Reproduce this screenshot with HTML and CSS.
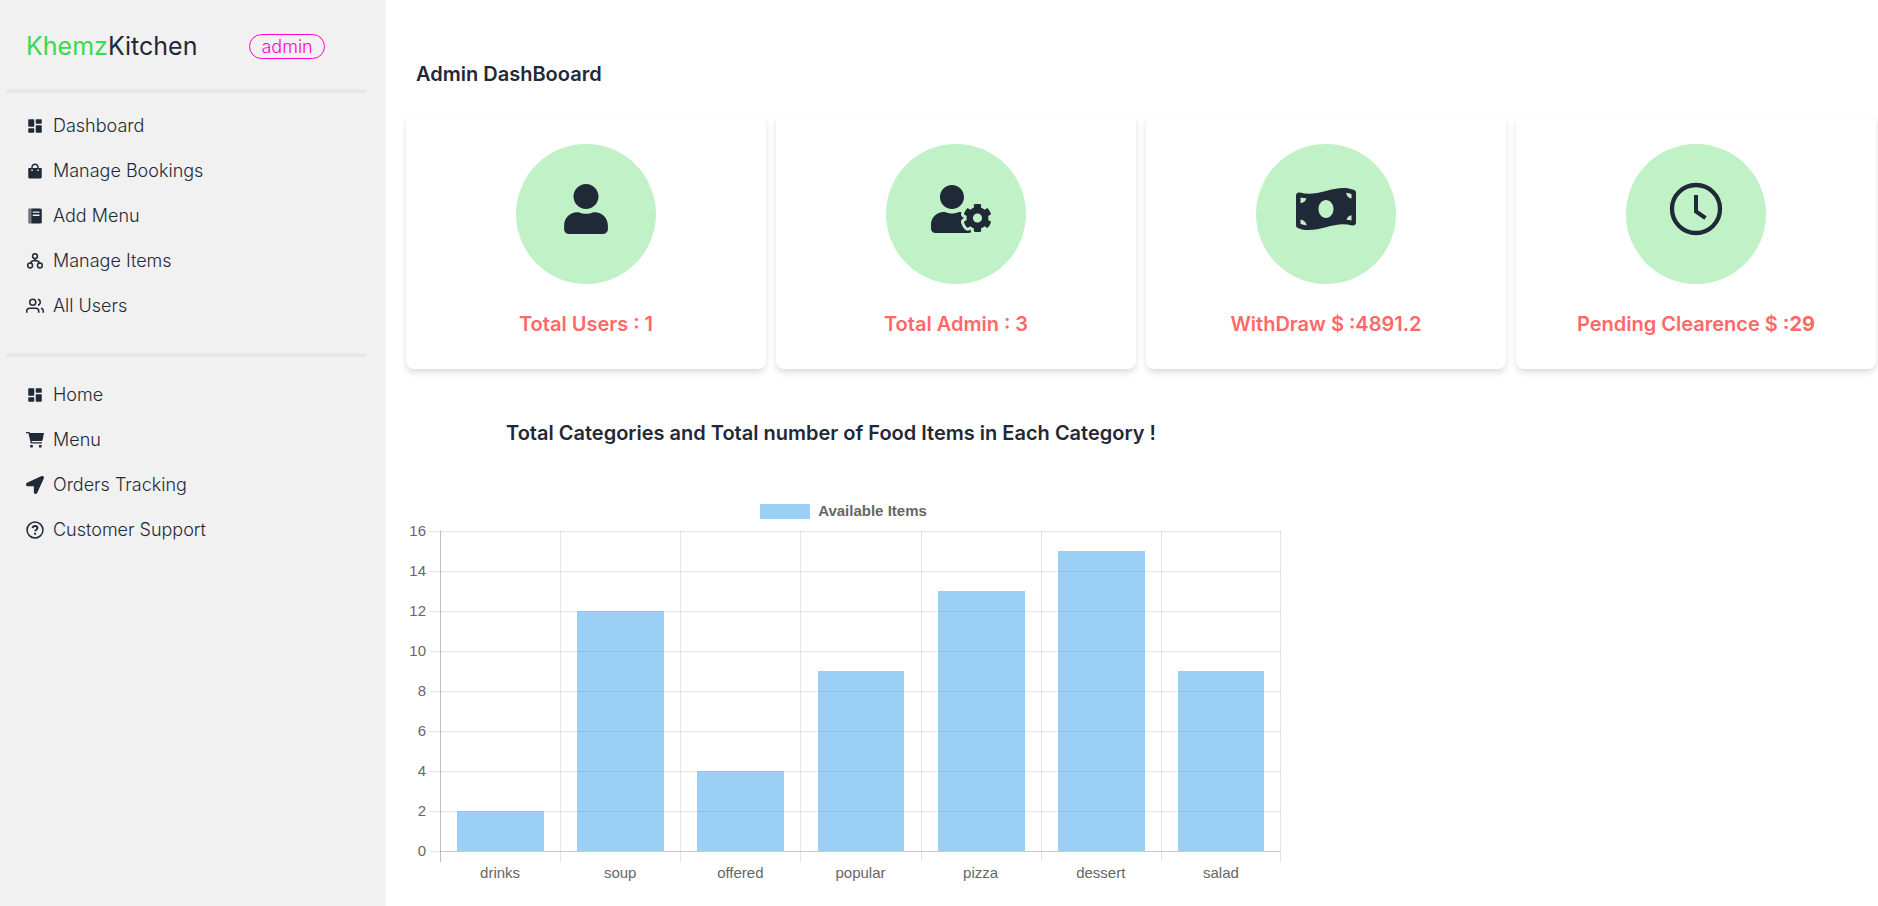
FILE: index.html
```html
<!DOCTYPE html>
<html lang="en">
<head>
<meta charset="utf-8">
<title>KhemzKitchen Admin</title>
<link rel="stylesheet" href="styles.css">
</head>
<body>
<svg class="sprite" aria-hidden="true">
  <symbol id="i-dashboard" viewBox="0 0 24 24"><path d="M3 12a1 1 0 0 0 1 1h6a1 1 0 0 0 1-1V4a1 1 0 0 0-1-1H4a1 1 0 0 0-1 1v8zm0 8a1 1 0 0 0 1 1h6a1 1 0 0 0 1-1v-4a1 1 0 0 0-1-1H4a1 1 0 0 0-1 1v4zm10 0a1 1 0 0 0 1 1h6a1 1 0 0 0 1-1v-8a1 1 0 0 0-1-1h-6a1 1 0 0 0-1 1v8zm1-17a1 1 0 0 0-1 1v4a1 1 0 0 0 1 1h6a1 1 0 0 0 1-1V4a1 1 0 0 0-1-1h-6z"/></symbol>
</svg>
<div class="layout">
  <aside class="sidebar">
    <div class="brand">
      <a class="logo" href="#"><span class="logo-accent">Khemz</span>Kitchen</a>
      <span class="badge">admin</span>
    </div>
    <hr class="divider">
    <nav class="menu" aria-label="Admin">
      <a class="menu-link" href="#"><svg class="icon"><use href="#i-dashboard"/></svg>Dashboard</a>
      <a class="menu-link" href="#"><svg class="icon" viewBox="0 0 24 24"><path fill-rule="evenodd" d="M5 22h14c1.103 0 2-.897 2-2V9a1 1 0 0 0-1-1h-3V7c0-2.757-2.243-5-5-5S7 4.243 7 7v1H4a1 1 0 0 0-1 1v11c0 1.103.897 2 2 2zM9 7c0-1.654 1.346-3 3-3s3 1.346 3 3v1H9V7zm-2 3h2v2H7v-2zm8 0h2v2h-2v-2z"/></svg>Manage Bookings</a>
      <a class="menu-link" href="#"><svg class="icon" viewBox="0 0 24 24"><path opacity=".6" d="M3 2h4v20H3z"/><path fill-rule="evenodd" d="M7 2h12a2 2 0 0 1 2 2v16a2 2 0 0 1-2 2H7V2zm2 4v1.500h9V6H9zm0 4v2h9v-2H9z"/></svg>Add Menu</a>
      <a class="menu-link" href="#"><svg class="icon line" viewBox="0 0 24 24"><circle cx="12" cy="5.500" r="3.200"/><circle cx="5.500" cy="18" r="3.200"/><circle cx="18.500" cy="18" r="3.200"/><path d="M12 8.500v3M6 15c.5-2 2-3.500 4-3.500h4c2 0 3.500 1.500 4 3.500"/></svg>Manage Items</a>
      <a class="menu-link" href="#"><svg class="icon line" viewBox="0 0 24 24"><circle cx="9" cy="7" r="4"/><path d="M17 21v-2a4 4 0 0 0-4-4H5a4 4 0 0 0-4 4v2M23 21v-2a4 4 0 0 0-3-3.870M16 3.130a4 4 0 0 1 0 7.750"/></svg>All Users</a>
    </nav>
    <hr class="divider">
    <nav class="menu menu-site" aria-label="Site">
      <a class="menu-link" href="#"><svg class="icon"><use href="#i-dashboard"/></svg>Home</a>
      <a class="menu-link" href="#"><svg class="icon" viewBox="0 0 18 18"><path d="M0 1h3.400l.4 1H18l-1.500 7.200q-.2.800-1 .800H5.600l.3 1.200H16v1.200H4.800L2.500 2.200H0zM4.200 14h2.600v2.600H4.200zM13 14h2.600v2.600H13z"/></svg>Menu</a>
      <a class="menu-link" href="#"><svg class="icon" viewBox="0 0 512 512"><path d="M444.520 3.520L28.740 195.420c-47.970 22.390-31.980 92.750 19.190 92.750h175.910v175.910c0 51.170 70.360 67.170 92.750 19.190l191.900-415.780c15.990-38.380-25.590-79.970-63.970-63.970z"/></svg>Orders Tracking</a>
      <a class="menu-link" href="#"><svg class="icon line" viewBox="0 0 24 24"><circle cx="12" cy="12" r="10.600"/><path stroke-width="2.500" d="M8.800 9.600c.2-2 1.500-2.900 3.300-2.900 1.900 0 3.200 1 3.200 2.600 0 2.200-3.100 2.300-3.100 4.500M12.200 15.700v2.500"/></svg>Customer Support</a>
    </nav>
  </aside>
  <main class="main">
    <h1 class="title">Admin DashBooard</h1>
    <section class="cards">
      <article class="card">
        <div class="disc"><svg class="glyph" viewBox="-32 -51 512 614"><path d="M224 256c70.700 0 128-57.300 128-128S294.700 0 224 0 96 57.300 96 128s57.300 128 128 128zm89.600 32h-16.700c-22.200 10.200-46.900 16-72.900 16s-50.600-5.800-72.900-16h-16.700C60.200 288 0 348.200 0 422.400V464c0 26.500 21.500 48 48 48h352c26.500 0 48-21.500 48-48v-41.600c0-74.200-60.200-134.400-134.400-134.400z"/></svg></div>
        <p class="stat">Total Users : 1</p>
      </article>
      <article class="card">
        <div class="disc"><svg class="glyph" viewBox="-53 -64 640 640"><path d="M610.500 373.300c2.600-14.100 2.600-28.500 0-42.600l25.800-14.900c3-1.700 4.300-5.200 3.300-8.500-6.700-21.600-18.200-41.200-33.200-57.400-2.300-2.500-6-3.100-9-1.400l-25.800 14.900c-10.900-9.300-23.400-16.500-36.900-21.300v-29.800c0-3.400-2.400-6.400-5.700-7.100-22.300-5-45-4.800-66.200 0-3.300.7-5.700 3.700-5.700 7.100v29.800c-13.500 4.800-26 12-36.900 21.300l-25.800-14.900c-2.900-1.700-6.700-1.100-9 1.400-15 16.200-26.500 35.800-33.200 57.400-1 3.300.4 6.800 3.300 8.500l25.800 14.900c-2.600 14.100-2.600 28.500 0 42.600l-25.800 14.900c-3 1.700-4.300 5.200-3.300 8.500 6.700 21.600 18.200 41.100 33.200 57.400 2.300 2.500 6 3.100 9 1.400l25.800-14.900c10.900 9.300 23.400 16.500 36.900 21.300v29.800c0 3.400 2.400 6.400 5.700 7.100 22.300 5 45 4.800 66.200 0 3.300-.7 5.700-3.700 5.700-7.100v-29.800c13.500-4.800 26-12 36.900-21.300l25.800 14.900c2.900 1.700 6.700 1.100 9-1.400 15-16.200 26.500-35.800 33.200-57.400 1-3.300-.4-6.800-3.300-8.500l-25.800-14.900zM496 400.500c-26.800 0-48.500-21.800-48.500-48.500s21.800-48.500 48.500-48.500 48.500 21.800 48.500 48.500-21.700 48.500-48.500 48.500zM224 256c70.700 0 128-57.300 128-128S294.700 0 224 0 96 57.300 96 128s57.300 128 128 128zm201.200 226.500c-2.300-1.200-4.600-2.600-6.800-3.900l-7.900 4.600c-6 3.400-12.800 5.300-19.600 5.300-10.900 0-21.400-4.600-28.900-12.600-18.300-19.800-32.300-43.900-40.200-69.600-5.500-17.700 1.900-36.400 17.900-45.700l7.900-4.600c-.1-2.600-.1-5.200 0-7.800l-7.900-4.600c-16-9.200-23.400-28-17.900-45.700.9-2.900 2.200-5.800 3.200-8.700-3.800-.3-7.500-1.200-11.400-1.200h-16.700c-22.200 10.200-46.900 16-72.900 16s-50.600-5.800-72.900-16h-16.700C60.200 288 0 348.200 0 422.400V464c0 26.500 21.500 48 48 48h352c10.100 0 19.500-3.200 27.200-8.500-1.200-3.800-2-7.700-2-11.800v-9.200z"/></svg></div>
        <p class="stat">Total Admin : 3</p>
      </article>
      <article class="card">
        <div class="disc"><svg class="glyph" viewBox="0 -64 640 640"><path d="M621.160 54.460C582.370 38.190 543.550 32 504.750 32c-123.170-.01-246.330 62.340-369.500 62.340-30.890 0-61.760-3.920-92.650-13.720-3.470-1.100-6.950-1.620-10.350-1.620C15.040 79 0 92.320 0 110.810v317.260c0 12.630 7.230 24.600 18.840 29.460C57.630 473.810 96.450 480 135.250 480c123.170 0 246.340-62.350 369.510-62.350 30.890 0 61.760 3.920 92.650 13.720 3.470 1.100 6.950 1.620 10.350 1.620 17.210 0 32.250-13.320 32.250-31.810V83.930c-.01-12.640-7.240-24.600-18.850-29.470zM48 132.220c20.120 5.040 41.120 7.570 62.720 8.930C104.840 170.540 79 192.690 48 192.690v-60.470zm0 285v-47.780c34.370 0 62.180 27.270 63.710 61.400-22.530-1.810-43.590-6.310-63.710-13.620zM320 352c-44.190 0-80-42.990-80-96 0-53.020 35.820-96 80-96s80 42.980 80 96c0 53.030-35.830 96-80 96zm272 27.780c-17.520-4.390-35.710-6.850-54.320-8.440 5.870-26.080 27.500-45.880 54.320-49.280v57.720zm0-236.110c-30.890-3.910-54.860-29.700-55.810-61.550 19.540 2.170 38.090 6.230 55.810 12.660v48.890z"/></svg></div>
        <p class="stat">WithDraw $ :4891.2</p>
      </article>
      <article class="card">
        <div class="disc"><svg class="glyph" viewBox="0 0 60 60" fill="none" stroke="currentColor"><circle cx="30" cy="30" r="24" stroke-width="4.300"/><path stroke-width="4" d="M30 16v16.500l9.500 6.500"/></svg></div>
        <p class="stat">Pending Clearence $ <b class="amount">:29</b></p>
      </article>
    </section>
    <h2 class="title chart-title">Total Categories and Total number of Food Items in Each Category !</h2>
    <figure class="chart">
      <figcaption class="legend"><span class="swatch"></span>Available Items</figcaption>
      <div class="chart-body">
        <div class="y-axis"><span>16</span><span>14</span><span>12</span><span>10</span><span>8</span><span>6</span><span>4</span><span>2</span><span>0</span></div>
        <div class="ticks"></div>
        <div class="plot">
          <div class="col"><div class="track"><div class="bar" style="height:12.5%"></div></div><span class="cat">drinks</span></div>
          <div class="col"><div class="track"><div class="bar" style="height:75%"></div></div><span class="cat">soup</span></div>
          <div class="col"><div class="track"><div class="bar" style="height:25%"></div></div><span class="cat">offered</span></div>
          <div class="col"><div class="track"><div class="bar" style="height:56.25%"></div></div><span class="cat">popular</span></div>
          <div class="col"><div class="track"><div class="bar" style="height:81.25%"></div></div><span class="cat">pizza</span></div>
          <div class="col"><div class="track"><div class="bar" style="height:93.75%"></div></div><span class="cat">dessert</span></div>
          <div class="col"><div class="track"><div class="bar" style="height:56.25%"></div></div><span class="cat">salad</span></div>
        </div>
      </div>
    </figure>
  </main>
</div>
</body>
</html>
```
FILE: styles.css
```css
* { box-sizing: border-box; }

body {
  margin: 0;
  background: #fff;
  color: #1f2937;
  font-family: Inter, "Liberation Sans", sans-serif;
}

.sprite { display: none; }

.layout {
  display: flex;
  min-height: 100vh;
}

/* Sidebar */
.sidebar {
  flex: 0 0 386px;
  padding: 0 20px 0 6px;
  background: #f1f1f1;
}

.brand {
  display: flex;
  align-items: center;
  gap: 52px;
  padding: 28px 20px 25px;
}

.logo {
  color: inherit;
  font-size: 25px;
  line-height: 36px;
  text-decoration: none;
}

.logo-accent { color: #39db4a; }

.badge {
  padding: 0 11px;
  border: 1px solid #ff00d4;
  border-radius: 13px;
  color: #ff00d4;
  font-size: 18px;
  font-weight: 300;
  line-height: 23px;
}

.divider {
  height: 4px;
  margin: 0;
  border: 0;
  background: #e5e7eb;
}

.menu {
  display: flex;
  flex-direction: column;
  padding: 10px 20px 25px;
}

.menu-site { padding-top: 15px; }

.menu-link {
  display: flex;
  align-items: center;
  gap: 9px;
  color: inherit;
  font-size: 18px;
  font-weight: 300;
  line-height: 45px;
  text-decoration: none;
}

.icon {
  width: 18px;
  height: 18px;
  fill: currentColor;
}

.line {
  fill: none;
  stroke: currentColor;
  stroke-width: 2;
}

/* Content */
.main {
  flex: 1;
  min-width: 0;
  padding: 60px 2px 0 20px;
}

.title {
  margin: 0;
  padding-left: 10px;
  font-size: 20px;
  font-weight: 600;
  line-height: 28px;
}

.cards {
  display: grid;
  grid-template-columns: repeat(4, 1fr);
  gap: 10px;
  margin-top: 26px;
}

.card {
  display: flex;
  flex-direction: column;
  align-items: center;
  padding: 30px 0;
  border-radius: 8px;
  background: #fff;
  box-shadow: 0 4px 6px -1px rgba(0, 0, 0, 0.1), 0 4px 8px rgba(0, 0, 0, 0.05);
}

.disc {
  display: flex;
  justify-content: center;
  align-items: center;
  width: 140px;
  height: 140px;
  padding-bottom: 10px;
  border-radius: 50%;
  background: #c1f1c6;
}

.glyph {
  width: 60px;
  height: 60px;
  overflow: visible;
}

.glyph:not([fill]) { fill: currentColor; }

.stat {
  margin: 25px 0 0;
  color: #ff6868;
  font-size: 20px;
  font-weight: 600;
  line-height: 30px;
}

.amount { font-weight: 700; }

.chart-title {
  margin-top: 50px;
  padding-left: 100px;
}

/* Chart */
.chart {
  max-width: 875px;
  margin: 54px 0 0;
  color: #666;
  font-family: "Liberation Sans", Arial, sans-serif;
  font-size: 15px;
  line-height: 20px;
}

.legend {
  display: flex;
  justify-content: center;
  align-items: center;
  gap: 8px;
  padding-bottom: 10px;
  font-weight: 700;
}

.swatch {
  width: 50px;
  height: 15px;
  background: rgba(54, 162, 235, 0.5);
}

.chart-body {
  display: flex;
  align-items: flex-start;
}

.y-axis {
  display: flex;
  flex-direction: column;
  justify-content: space-between;
  width: 20px;
  height: 340px;
  margin-top: -10px;
  text-align: right;
}

.ticks,
.plot {
  background: repeating-linear-gradient(rgba(0, 0, 0, 0.1) 0 1px, transparent 1px 40px) top / 100% 321px no-repeat;
}

.ticks {
  width: 10px;
  height: 321px;
  margin-left: 4px;
}

.plot {
  display: flex;
  flex: 1;
}

.col {
  flex: 1;
  text-align: center;
}

.track {
  display: flex;
  justify-content: center;
  align-items: flex-end;
  height: 331px;
  padding-bottom: 11px;
  border-left: 1px solid rgba(0, 0, 0, 0.1);
  background: linear-gradient(rgba(0, 0, 0, 0.12), rgba(0, 0, 0, 0.12)) 0 320px / 100% 1px no-repeat;
}

.col:first-child .track { border-left-color: rgba(0, 0, 0, 0.25); }
.col:last-child .track { border-right: 1px solid rgba(0, 0, 0, 0.1); }

.bar {
  width: 73%;
  background: rgba(54, 162, 235, 0.5);
}

.cat {
  display: block;
  padding-top: 1px;
}
```
